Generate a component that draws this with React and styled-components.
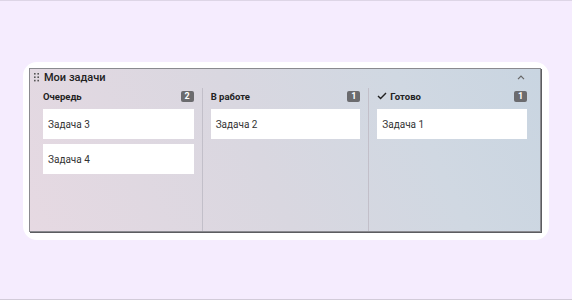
import React from 'react';
import styled, { createGlobalStyle } from 'styled-components';

const GlobalStyle = createGlobalStyle`
    html, body {
        margin: 0;
        padding: 0;
        background: #f5ecfe;
    }
    * {
        box-sizing: border-box;
    }
`;

const Page = styled.div`
    width: 572px;
    height: 300px;
    padding-top: 2px;
    border-top: 1px solid #ddd5e6;
    border-bottom: 1px solid #d2cbd9;
    display: flex;
    align-items: center;
    justify-content: center;
    font-family: Roboto, "Noto Sans", sans-serif;
`;

const Card = styled.div`
    width: 526px;
    height: 178px;
    background: #fff;
    border-radius: 14px;
    padding: 6px 8px 8px 6px;
    display: flex;
`;

const Panel = styled.div`
    flex: 1;
    display: flex;
    flex-direction: column;
    border: 1px solid #8a8a8f;
    box-shadow: 1px 1px 0 #5c5c60;
    background: linear-gradient(65deg, #e6d9e2 0%, #d9d7e0 45%, #d0d8e2 75%, #c9d5e1 100%);
`;

const Header = styled.div`
    height: 17px;
    display: flex;
    align-items: center;
    padding: 0 15px 0 4px;
    gap: 4px;
`;

const Title = styled.div`
    flex: 1;
    font-size: 11px;
    font-weight: 500;
    color: #222;
`;

const Body = styled.div`
    flex: 1;
    display: grid;
    grid-template-columns: repeat(3, 1fr);
    padding: 2px 5px 0;
`;

const Column = styled.div`
    display: flex;
    flex-direction: column;
    gap: 5px;
    padding: 0 8px;
    border-left: ${({ first }) => (first ? 'none' : '1px solid #c2bfc9')};
`;

const ColumnHead = styled.div`
    height: 16px;
    display: flex;
    align-items: center;
    gap: 3px;
    font-size: 9.5px;
    font-weight: 700;
    color: #222;
`;

const ColumnName = styled.span`
    flex: 1;
`;

const Badge = styled.span`
    min-width: 13px;
    height: 11px;
    border-radius: 2px;
    background: #6b6b6e;
    color: #fff;
    font-size: 9px;
    font-weight: 700;
    display: flex;
    align-items: center;
    justify-content: center;
`;

const Task = styled.div`
    height: 30px;
    background: #fff;
    display: flex;
    align-items: center;
    padding: 0 5px;
    font-size: 10px;
    color: #333;
`;

const Grip = () => (
    <svg width="6" height="9" viewBox="0 0 6 9" fill="#555">
        <rect x="0" y="0" width="1.6" height="1.6" />
        <rect x="3.4" y="0" width="1.6" height="1.6" />
        <rect x="0" y="3.4" width="1.6" height="1.6" />
        <rect x="3.4" y="3.4" width="1.6" height="1.6" />
        <rect x="0" y="6.8" width="1.6" height="1.6" />
        <rect x="3.4" y="6.8" width="1.6" height="1.6" />
    </svg>
);

const Chevron = () => (
    <svg width="8" height="5" viewBox="0 0 8 5" fill="none" stroke="#666" strokeWidth="1.2">
        <path d="M1 4.2 L4 1.2 L7 4.2" />
    </svg>
);

const Check = () => (
    <svg width="10" height="8" viewBox="0 0 10 8" fill="none" stroke="#222" strokeWidth="1.4">
        <path d="M1 4 L3.6 6.6 L9 1" />
    </svg>
);

const columns = [
    { name: 'Очередь', tasks: ['Задача 3', 'Задача 4'] },
    { name: 'В работе', tasks: ['Задача 2'] },
    { name: 'Готово', tasks: ['Задача 1'], done: true },
];

const App = () => (
    <>
        <GlobalStyle />
        <Page>
            <Card>
                <Panel>
                    <Header>
                        <Grip />
                        <Title>Мои задачи</Title>
                        <Chevron />
                    </Header>
                    <Body>
                        {columns.map((col, i) => (
                            <Column key={col.name} first={i === 0}>
                                <ColumnHead>
                                    {col.done && <Check />}
                                    <ColumnName>{col.name}</ColumnName>
                                    <Badge>{col.tasks.length}</Badge>
                                </ColumnHead>
                                {col.tasks.map(t => <Task key={t}>{t}</Task>)}
                            </Column>
                        ))}
                    </Body>
                </Panel>
            </Card>
        </Page>
    </>
);

export default App;
